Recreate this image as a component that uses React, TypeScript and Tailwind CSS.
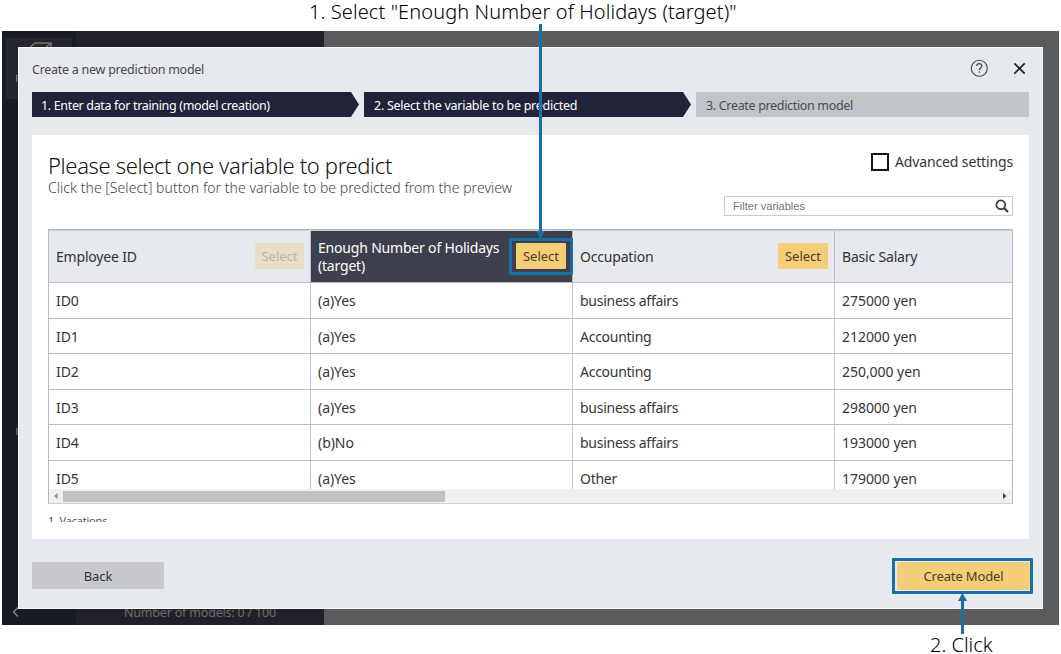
import type { ReactNode } from "react";

type Column = { name: ReactNode; width: string; state: "disabled" | "selected" | "normal" | "none" };

const columns: Column[] = [
  { name: "Employee ID", width: "w-[262px]", state: "disabled" },
  { name: <>Enough Number of Holidays<br />(target)</>, width: "w-[262px]", state: "selected" },
  { name: "Occupation", width: "w-[262px]", state: "normal" },
  { name: "Basic Salary", width: "flex-1", state: "none" },
];

const rows = [
  { h: "h-9", cells: ["ID0", "(a)Yes", "business affairs", "275000 yen"] },
  { h: "h-[35px]", cells: ["ID1", "(a)Yes", "Accounting", "212000 yen"] },
  { h: "h-9", cells: ["ID2", "(a)Yes", "Accounting", "250,000 yen"] },
  { h: "h-[35px]", cells: ["ID3", "(a)Yes", "business affairs", "298000 yen"] },
  { h: "h-9", cells: ["ID4", "(b)No", "business affairs", "193000 yen"] },
  { h: "h-[35px]", cells: ["ID5", "(a)Yes", "Other", "179000 yen"] },
];

const tracking = ["tracking-[-0.1px]", "tracking-[-0.05px]", "tracking-[-0.27px]", "tracking-[-0.04px]"];

function SelectButton({ state }: { state: Column["state"] }) {
  if (state === "none") return null;
  if (state === "disabled")
    return <button className="-mt-px h-[26px] w-[49px] shrink-0 bg-[#e9dfc5] pt-px text-[13px] leading-none text-[#b5b3ad]">Select</button>;
  return (
    <div className="relative -mt-px shrink-0">
      <button className="block h-[26px] w-[50px] rounded-[1px] bg-[#f4cd78] pt-px text-[13px] leading-none text-[#4a3d24]">Select</button>
      {state === "selected" && <div className="absolute -top-[5px] -left-[7px] h-[37px] w-16 rounded-[1px] border-[3px] border-[#186fa5]" />}
    </div>
  );
}

function Steps() {
  return (
    <div className="mt-[15px] flex h-[25px] gap-[5px] text-[12.5px] leading-[27px] whitespace-nowrap text-white">
      <div className="w-[327px] bg-[#20233a] pl-[9px] tracking-[-0.34px] [clip-path:polygon(0_0,319px_0,100%_50%,319px_100%,0_100%)]">
        1. Enter data for training (model creation)
      </div>
      <div className="w-[327px] bg-[#20233a] pl-[10px] tracking-[-0.27px] [clip-path:polygon(0_0,319px_0,100%_50%,319px_100%,0_100%)]">
        2. Select the variable to be predicted
      </div>
      <div className="flex-1 bg-[#c1c4c9] pl-[10px] tracking-[-0.33px] text-[#4b4d51]">3. Create prediction model</div>
    </div>
  );
}

function PreviewTable() {
  return (
    <div className="mt-3 h-[275px] w-[965px] border border-[#b3b9c3] border-b-[#cdd2d8]">
      <div className="h-[259px] overflow-hidden">
        <div className="flex h-[53px] border-t border-b border-t-[#c9ced6] border-b-[#b9bec8] bg-[#e6e9ee]">
          {columns.map((c, i) => (
            <div
              key={i}
              className={`flex items-center justify-between pr-[6px] pl-[7px] text-[14px] leading-[18px] whitespace-nowrap ${c.width} ${i < 3 ? "border-r border-[#b9bec8]" : ""} ${c.state === "selected" ? "bg-[#3e3f4c] text-white" : "text-[#333]"}`}
            >
              <span className="tracking-[-0.19px]">{c.name}</span>
              <SelectButton state={c.state} />
            </div>
          ))}
        </div>
        {rows.map((r) => (
          <div key={r.cells[0]} className={`flex border-b border-[#b9bec8] text-[14px] text-[#363636] ${r.h}`}>
            {r.cells.map((cell, i) => (
              <div key={i} className={`flex items-center pl-[7px] ${columns[i].width} ${tracking[i]} ${i < 3 ? "border-r border-[#c3c8d0]" : ""}`}>
                {cell}
              </div>
            ))}
          </div>
        ))}
      </div>
      <div className="flex h-[14px] items-center bg-[#f0f0f0]">
        <svg className="w-[14px]" height="14" viewBox="0 0 14 14"><path d="M8.500 4v6L5 7z" fill="#8f8f8f" /></svg>
        <div className="h-[11px] w-[382px] bg-[#c1c1c1]" />
        <svg className="ml-auto w-[14px]" height="14" viewBox="0 0 14 14"><path d="M5 4v6l3.500-3z" fill="#444" /></svg>
      </div>
    </div>
  );
}

function Modal() {
  return (
    <div className="absolute top-[16px] left-[16px] flex h-[562px] w-[1025px] flex-col border border-[#f7f8fa] bg-[#e6e9ee] px-[13px]">
      <div className="flex h-[29px] items-end pt-[9px]">
        <h1 className="mb-[-2px] text-[12.5px] leading-[18px] tracking-[-0.26px] whitespace-nowrap text-[#4a4a4a]">Create a new prediction model</h1>
        <svg className="ml-auto" width="18" height="18" viewBox="0 0 18 18" fill="none" stroke="#4a4a4a">
          <circle cx="9.300" cy="9.300" r="8" strokeWidth="1.100" />
          <path d="M6.800 7.100c0-1.600 1.100-2.500 2.500-2.500s2.500.9 2.500 2.200c0 1.900-2.400 2-2.400 4.200M9.400 12.200v1.500" strokeWidth="1.300" />
        </svg>
        <svg className="mr-px ml-6" width="16" height="18" viewBox="0 0 16 18" fill="none" stroke="#222" strokeWidth="1.700">
          <path d="M2.300 4.300l10.400 10.400M12.700 4.300L2.300 14.700" />
        </svg>
      </div>
      <Steps />
      <div className="mt-[18px] h-[404px] bg-white px-4 pt-4">
        <div className="flex h-[46px] justify-between">
          <div className="whitespace-nowrap">
            <h2 className="text-[22px] leading-[28px] font-light tracking-[-0.36px] text-[#111]">Please select one variable to predict</h2>
            <p className="text-[14px] leading-[17px] font-light tracking-[0.04px] text-[#444]">
              Click the [Select] button for the variable to be predicted from the preview
            </p>
          </div>
          <label className="flex h-[21px] items-center text-[14px] tracking-[-0.14px] whitespace-nowrap text-[#333]">
            <span className="mr-[6px] size-[18px] border-2 border-[#151515]" />
            Advanced settings
          </label>
        </div>
        <div className="mt-[-1px] ml-[676px] flex h-[20px] w-[289px] items-center border border-[#c9cbce] pr-[3px] pl-2">
          <span className="[font-family:'Liberation_Sans',sans-serif] text-[11px] tracking-[0.03px] text-[#757575]">Filter variables</span>
          <svg className="ml-auto" width="14" height="14" viewBox="0 0 14 14" fill="none" stroke="#3a3a3a">
            <circle cx="5.800" cy="5.800" r="4.400" strokeWidth="1.700" />
            <path d="M9 9l4 4" strokeWidth="2.200" />
          </svg>
        </div>
        <div className="pt-px">
          <PreviewTable />
        </div>
        <div className="mt-[9px] h-[9px] overflow-hidden text-[11px] leading-[15px] tracking-[-0.2px] text-[#555]">1. Vacations</div>
      </div>
      <div className="mt-[23px] flex justify-between text-[13px] tracking-[-0.14px]">
        <button className="h-[27px] w-[132px] rounded-[1px] bg-[#c8c9ce] pt-[2px] leading-none text-[#333]">Back</button>
        <div className="relative mr-[-1px]">
          <button className="block h-[28px] w-[133px] rounded-[1px] bg-[#f4cd78] pt-px leading-none text-[#4a3d24]">Create Model</button>
          <div className="absolute -top-1 -left-[5px] h-9 w-[141px] rounded-[1px] border-[3px] border-[#186fa5]" />
        </div>
      </div>
    </div>
  );
}

export default function App() {
  return (
    <div className="relative h-[654px] w-[1061px] overflow-hidden bg-white [font-family:'Noto_Sans',sans-serif]">
      <div className="h-[31px] pl-[309px] text-[20px] leading-[24px] font-light tracking-[0.1px] whitespace-nowrap text-black">
        1. Select "Enough Number of Holidays (target)"
      </div>
      <div className="relative ml-[2px] flex h-[594px] w-[1057px] bg-[#5b5c5e]">
        <div className="flex w-[74px] flex-col justify-between bg-[#181b23] pt-[7px] pl-1">
          <div className="h-[61px] w-[66px] bg-[#26262e]">
            <svg width="66" height="61" viewBox="0 0 66 61" fill="none" stroke="#74757a" strokeWidth="1.500">
              <path d="M22 11l7-6h16v6M38 11l7-6" />
              <path d="M10.500 37v7M10.500 37.500h4M10.500 41h4" strokeWidth="1" />
            </svg>
          </div>
          <div className="mt-[329px] ml-[10px] h-[7px] w-[2px] bg-[#54565c]" />
          <svg className="mt-auto mb-[7px] ml-[5px]" width="10" height="12" viewBox="0 0 10 12" fill="none" stroke="#8a8b8f" strokeWidth="1.300">
            <path d="M7 1.500L2.500 6L7 10.500" />
          </svg>
        </div>
        <div className="flex w-[248px] items-end bg-[#212129] pb-[3px] pl-[48px] text-[12.5px] leading-[18px] tracking-[-0.19px] text-[#6d6e72]">
          Number of models: 0 / 100
        </div>
        <Modal />
      </div>
      <div className="pt-[6px] pl-[930px] text-[20px] leading-[28px] h-[29px] font-light text-black">
        <span className="block h-[23px] leading-[27px]">2. Click</span>
      </div>
      <svg className="absolute top-[24px] left-[534px]" width="13" height="215" viewBox="0 0 13 215" fill="#186fa5">
        <path d="M5 0h3v207h3L6.500 215L2 207h3z" />
      </svg>
      <svg className="absolute top-[593px] left-[956px]" width="13" height="41" viewBox="0 0 13 41" fill="#186fa5">
        <path d="M6.500 0L11 8H8v33H5V8H2z" />
      </svg>
    </div>
  );
}
